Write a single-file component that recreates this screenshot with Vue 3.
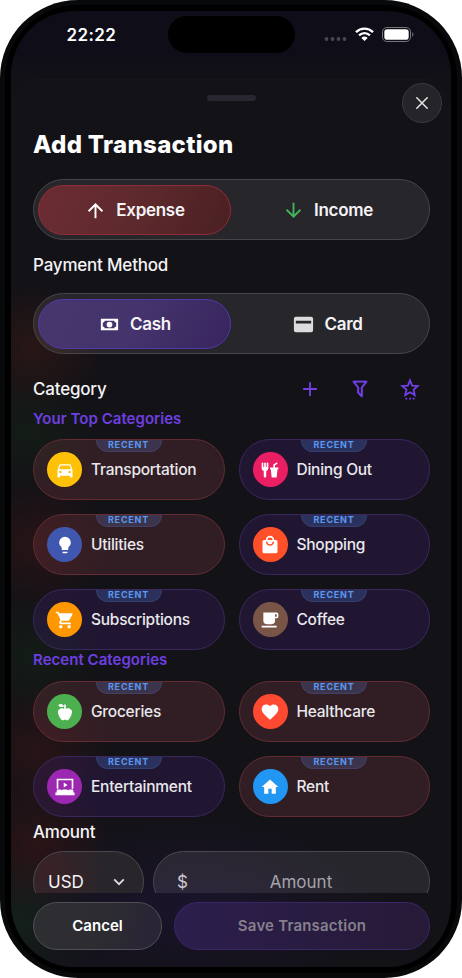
<script setup>
const paths = {
  car: 'M5,11L6.5,6.5H17.5L19,11M17.5,16A1.5,1.5 0 0,1 16,14.5A1.5,1.5 0 0,1 17.5,13A1.5,1.5 0 0,1 19,14.5A1.5,1.5 0 0,1 17.5,16M6.5,16A1.5,1.5 0 0,1 5,14.5A1.5,1.5 0 0,1 6.5,13A1.5,1.5 0 0,1 8,14.5A1.5,1.5 0 0,1 6.5,16M18.92,6C18.72,5.42 18.16,5 17.5,5H6.5C5.84,5 5.28,5.42 5.08,6L3,12V20A1,1 0 0,0 4,21H5A1,1 0 0,0 6,20V19H18V20A1,1 0 0,0 19,21H20A1,1 0 0,0 21,20V12L18.92,6Z',
  bulb: 'M12,2A7,7 0 0,0 5,9C5,11.38 6.19,13.47 8,14.74V17A1,1 0 0,0 9,18H15A1,1 0 0,0 16,17V14.74C17.81,13.47 19,11.38 19,9A7,7 0 0,0 12,2M9,21A1,1 0 0,0 10,22H14A1,1 0 0,0 15,21V20H9V21Z',
  cart: 'M17,18A2,2 0 0,1 19,20A2,2 0 0,1 17,22C15.89,22 15,21.1 15,20C15,18.89 15.89,18 17,18M1,2H4.27L5.21,4H20A1,1 0 0,1 21,5C21,5.17 20.95,5.34 20.88,5.5L17.3,11.97C16.96,12.58 16.3,13 15.55,13H8.1L7.2,14.63L7.17,14.75A0.25,0.25 0 0,0 7.42,15H19V17H7C5.89,17 5,16.1 5,15C5,14.65 5.09,14.32 5.24,14.04L6.6,11.59L3,4H1V2M7,18A2,2 0 0,1 9,20A2,2 0 0,1 7,22C5.89,22 5,21.1 5,20C5,18.89 5.89,18 7,18Z',
  apple: 'M20,10C22,13 17,22 15,22C13,22 13,21 12,21C11,21 11,22 9,22C7,22 2,13 4,10C6,7 9,7 11,8V5C5.38,8.07 4.11,3.78 4.11,3.78C4.11,3.78 6.77,0.19 11,5V3H13V8C15,7 18,7 20,10Z',
  theater: 'M4,4V14H2V2H22V14H20V4ZM10.5,6.5L15,9.5L10.5,12.5ZM2,16.5Q2,15 3.5,15H6.2Q7.6,15 8,16.2Q8.4,15 9.8,15H14.2Q15.6,15 16,16.2Q16.4,15 17.8,15H20.5Q22,15 22,16.5V18.5H23.5V22H0.5V18.5H2Z',
  heart: 'M12,21.35L10.55,20.03C5.4,15.36 2,12.27 2,8.5C2,5.41 4.42,3 7.5,3C9.24,3 10.91,3.81 12,5.08C13.09,3.81 14.76,3 16.5,3C19.58,3 22,5.41 22,8.5C22,12.27 18.6,15.36 13.45,20.03L12,21.35Z',
  home: 'M10,20V14H14V20H19V12H22L12,3L2,12H5V20H10Z',
  coffee: 'M2,21H20V19H2M20,8H18V5H20M20,3H4V13A4,4 0 0,0 8,17H14A4,4 0 0,0 18,13V10H20A2,2 0 0,0 22,8V5C22,3.89 21.1,3 20,3Z',
  bag: 'M12,13A5,5 0 0,1 7,8H9A3,3 0 0,0 12,11A3,3 0 0,0 15,8H17A5,5 0 0,1 12,13M12,3A3,3 0 0,1 15,6H9A3,3 0 0,1 12,3M19,6H17A5,5 0 0,0 12,1A5,5 0 0,0 7,6H5C3.89,6 3,6.9 3,8V20A2,2 0 0,0 5,22H19A2,2 0 0,0 21,20V8C21,6.89 20.1,6 19,6Z',
  dining: 'M3,3A1,1 0 0,0 2,4V8L2,9.5C2,11.19 3.03,12.63 4.5,13.22V19.5A1.5,1.5 0 0,0 6,21A1.5,1.5 0 0,0 7.5,19.5V13.22C8.97,12.63 10,11.19 10,9.5V8L10,4A1,1 0 0,0 9,3A1,1 0 0,0 8,4V8A0.5,0.5 0 0,1 7.5,8.5A0.5,0.5 0 0,1 7,8V4A1,1 0 0,0 6,3A1,1 0 0,0 5,4V8A0.5,0.5 0 0,1 4.5,8.5A0.5,0.5 0 0,1 4,8V4A1,1 0 0,0 3,3M19.88,3C19.75,3 19.62,3.09 19.5,3.16L16,5.25V9H12V11H13L14,21H20L21,11H22V9H18V6.34L20.5,4.84C21,4.56 21.13,4 20.84,3.5C20.63,3.14 20.26,2.95 19.88,3Z',
}

const top = [
  { name: 'Transportation', icon: 'car', bg: 'amber', tone: 'red' },
  { name: 'Dining Out', icon: 'dining', bg: 'pink', tone: 'violet' },
  { name: 'Utilities', icon: 'bulb', bg: 'indigo', tone: 'red' },
  { name: 'Shopping', icon: 'bag', bg: 'deep', tone: 'violet' },
  { name: 'Subscriptions', icon: 'cart', bg: 'orange', tone: 'violet' },
  { name: 'Coffee', icon: 'coffee', bg: 'brown', tone: 'violet' },
]
const recent = [
  { name: 'Groceries', icon: 'apple', bg: 'green', tone: 'red' },
  { name: 'Healthcare', icon: 'heart', bg: 'scarlet', tone: 'red' },
  { name: 'Entertainment', icon: 'theater', bg: 'purple', tone: 'violet' },
  { name: 'Rent', icon: 'home', bg: 'blue', tone: 'red' },
]
const groups = [
  { title: 'Your Top Categories', items: top },
  { title: 'Recent Categories', items: recent },
]
</script>

<template>
  <div class="phone">
    <div class="bezel">
      <div class="screen">
        <header class="status">
          <span class="time">22:22</span>
          <span class="island"></span>
          <span class="signals">
            <svg class="dots" viewBox="0 0 24 4"><circle v-for="n in 4" :key="n" :cx="n * 6 - 3.5" cy="2" r="1.9" /></svg>
            <svg class="wifi" viewBox="0 0 19 14">
              <path d="M1 5.1 A12.2 12.2 0 0 1 18 5.1" />
              <path d="M4.1 8.3 A7.8 7.8 0 0 1 14.9 8.3" />
              <path class="fill" d="M6.3 10.9 A4.6 4.6 0 0 1 12.7 10.9 L9.5 14 Z" />
            </svg>
            <svg class="battery" viewBox="0 0 32 15">
              <rect class="shell" x="0.5" y="0.5" width="28" height="14" rx="4.3" />
              <rect class="level" x="2.3" y="2.3" width="24.4" height="10.4" rx="2.8" />
              <path class="cap" d="M30 5 Q31.6 5.8 31.6 7.5 T30 10 Z" />
            </svg>
          </span>
        </header>

        <main class="sheet">
          <div class="handle"></div>
          <button class="close" aria-label="Close">
            <svg viewBox="0 0 12 12"><path d="M0.8 0.8 11.2 11.2M11.2 0.8 0.8 11.2" /></svg>
          </button>

          <div class="scroll">
            <h1>Add Transaction</h1>
            <div class="track">
              <div class="option chosen-red">
                <svg viewBox="0 0 24 24"><path d="M13,20H11V8L5.5,13.5L4.08,12.08L12,4.16L19.92,12.08L18.5,13.5L13,8V20Z" /></svg>
                <span>Expense</span>
              </div>
              <div class="option">
                <svg class="income" viewBox="0 0 24 24"><path d="M11,4H13V16L18.5,10.5L19.92,11.92L12,19.84L4.08,11.92L5.5,10.5L11,16V4Z" /></svg>
                <span>Income</span>
              </div>
            </div>

            <h2 class="method">Payment Method</h2>
            <div class="track">
              <div class="option chosen-violet">
                <svg viewBox="0 0 24 24"><path d="M3,6H21V18H3V6M12,9A3,3 0 0,1 15,12A3,3 0 0,1 12,15A3,3 0 0,1 9,12A3,3 0 0,1 12,9M7,8A2,2 0 0,1 5,10V14A2,2 0 0,1 7,16H17A2,2 0 0,1 19,14V10A2,2 0 0,1 17,8H7Z" /></svg>
                <span>Cash</span>
              </div>
              <div class="option">
                <svg class="plain" viewBox="0 0 24 24"><path fill-rule="evenodd" d="M4,4H20A2,2 0 0,1 22,6V18A2,2 0 0,1 20,20H4A2,2 0 0,1 2,18V6A2,2 0 0,1 4,4M4,8V11H20V8Z" /></svg>
                <span>Card</span>
              </div>
            </div>

            <div class="category-bar">
              <h2>Category</h2>
              <div class="tools">
                <svg viewBox="0 0 24 24"><path d="M19.5,13H13V19.5H11V13H4.5V11H11V4.5H13V11H19.5V13Z" /></svg>
                <svg class="bold" viewBox="0 0 24 24"><path d="M15,19.88C15.04,20.18 14.94,20.5 14.71,20.71C14.32,21.1 13.69,21.1 13.3,20.71L9.29,16.7C9.06,16.47 8.96,16.16 9,15.87V10.75L4.21,4.62C3.87,4.19 3.95,3.56 4.38,3.22C4.57,3.08 4.78,3 5,3V3H19V3C19.22,3 19.43,3.08 19.62,3.22C20.05,3.56 20.13,4.19 19.79,4.62L15,10.75V19.88M7.04,5L11,10.06V15.58L13,17.58V10.05L16.96,5H7.04Z" /></svg>
                <svg viewBox="0 0 24 24">
                  <path class="line" d="M12 2.6 14.4 8.3 20.4 8.8 15.8 12.8 17.2 18.7 12 15.6 6.8 18.7 8.2 12.8 3.6 8.8 9.6 8.3Z" />
                  <path d="M7 21.5H9V23.5H7ZM11 21.5H13V23.5H11ZM15 21.5H17V23.5H15Z" />
                </svg>
              </div>
            </div>

            <section v-for="group in groups" :key="group.title">
              <h3>{{ group.title }}</h3>
              <div class="grid">
                <article v-for="item in group.items" :key="item.name" class="card" :class="item.tone">
                  <span class="badge">RECENT</span>
                  <span class="disc" :class="item.bg"><svg viewBox="0 0 24 24"><path :d="paths[item.icon]" /></svg></span>
                  <span class="name">{{ item.name }}</span>
                </article>
              </div>
            </section>

            <h2 class="amount-title">Amount</h2>
            <div class="amount-row">
              <div class="field currency">
                <span>USD</span>
                <svg viewBox="0 0 12 8"><path d="M1.2 1.4 6 6.2 10.8 1.4" /></svg>
              </div>
              <div class="field amount">
                <span class="symbol">$</span>
                <span class="placeholder">Amount</span>
              </div>
            </div>
          </div>

          <footer>
            <button class="cancel">Cancel</button>
            <button class="save">Save Transaction</button>
          </footer>
        </main>
      </div>
    </div>
  </div>
</template>

<style>
body {
  background: #fff;
}
</style>

<style scoped>
* {
  box-sizing: border-box;
}
.phone {
  width: 462px;
  height: 978px;
  padding: 5px;
  border-radius: 78px;
  background: #08090b;
  font-family: Inter, "Liberation Sans", sans-serif;
  color: #f4f3f6;
}
.bezel {
  height: 100%;
  padding: 6px;
  border-radius: 73px;
  background: #000;
}
.screen {
  height: 100%;
  display: flex;
  flex-direction: column;
  border-radius: 64px;
  overflow: hidden;
  background: linear-gradient(#0f0d17 0, #0f0d17 45px, #121116 68px);
}
.status {
  height: 68px;
  flex: none;
  display: grid;
  grid-template-columns: 157px 127px 1fr;
}
.time {
  padding: 14px 0 0 55.5px;
  font-size: 17px;
  font-weight: 600;
  line-height: 20px;
  letter-spacing: 0.4px;
  color: #fff;
}
.island {
  height: 37px;
  margin-top: 5px;
  border-radius: 19px;
  background: #000;
}
.signals {
  display: flex;
  gap: 7px;
  height: 15px;
  margin: 16px 0 0 29px;
}
.dots {
  width: 24px;
  height: 4px;
  margin-top: 10px;
  fill: #4b4750;
}
.wifi {
  width: 19px;
  height: 14px;
  fill: none;
  stroke: #fff;
  stroke-width: 2.4;
}
.wifi .fill {
  fill: #fff;
  stroke: none;
}
.battery {
  width: 32px;
  height: 15px;
  margin-left: 1px;
}
.shell {
  fill: none;
  stroke: #77747c;
}
.level {
  fill: #fff;
}
.cap {
  fill: #5b5860;
}
.sheet {
  position: relative;
  flex: 1;
  min-height: 0;
  display: flex;
  flex-direction: column;
  border-radius: 28px 28px 0 0;
  border-top: 1px solid #17161b;
  background:
    radial-gradient(ellipse 72px 62px at 22px 268px, rgba(110, 35, 15, 0.24), transparent),
    radial-gradient(ellipse 72px 60px at 18px 352px, rgba(25, 75, 20, 0.18), transparent),
    radial-gradient(ellipse 75px 66px at 26px 464px, rgba(110, 25, 18, 0.22), transparent),
    radial-gradient(ellipse 72px 60px at 20px 575px, rgba(25, 75, 20, 0.18), transparent),
    radial-gradient(ellipse 75px 66px at 26px 671px, rgba(110, 25, 18, 0.22), transparent),
    radial-gradient(ellipse 75px 66px at 26px 764px, rgba(115, 25, 18, 0.24), transparent),
    radial-gradient(ellipse 80px 70px at 10px 842px, rgba(20, 80, 25, 0.2), transparent),
    radial-gradient(ellipse 200px 90px at 180px 825px, rgba(45, 25, 95, 0.28), transparent),
    #131217;
}
.handle {
  flex: none;
  width: 49px;
  height: 6px;
  margin: 15px auto 0;
  border-radius: 3px;
  background: #28262e;
}
.close {
  position: absolute;
  top: 3px;
  right: 9px;
  width: 40px;
  height: 40px;
  padding: 0;
  display: grid;
  place-items: center;
  border: 1px solid #3a393e;
  border-radius: 50%;
  background: #252428;
}
.close svg {
  width: 12px;
  height: 12px;
  stroke: #e6e5e8;
  stroke-width: 1.5;
  stroke-linecap: round;
}
.scroll {
  flex: 1;
  min-height: 0;
  overflow: hidden;
  padding: 0 21px 0 22px;
}
h1,
h2,
h3 {
  margin: 0;
  white-space: nowrap;
}
h1 {
  margin: 29px 0 19px;
  font-size: 24px;
  line-height: 30px;
  font-weight: 800;
  letter-spacing: 0.33px;
  color: #fff;
}
h2 {
  font-size: 17px;
  line-height: 24px;
  font-weight: 500;
  letter-spacing: -0.2px;
}
.track {
  height: 61px;
  display: grid;
  grid-template-columns: 193px 1fr;
  gap: 2px;
  padding: 5px 7px 5px 4px;
  border: 1px solid #46454a;
  border-radius: 31px;
  background: rgba(255, 255, 255, 0.085);
}
.option {
  height: 50px;
  display: flex;
  align-items: center;
  justify-content: center;
  gap: 9px;
  border: 1px solid transparent;
  border-radius: 25px;
  font-size: 17px;
  font-weight: 600;
  letter-spacing: -0.3px;
}
.option svg {
  width: 23px;
  height: 23px;
  fill: #fff;
}
.option .income {
  fill: #43b358;
}
.option .plain {
  fill: #dcdbde;
}
.chosen-red {
  border-color: #8f2c35;
  background: linear-gradient(115deg, #6b2c32, #602a2e 45%, #4a2022);
}
.chosen-violet {
  border-color: #5237a8;
  background: linear-gradient(115deg, #46376d, #44336c 50%, #38255f);
}
.method {
  margin: 13px 0 16px;
}
.category-bar {
  height: 24px;
  margin-top: 23px;
  display: flex;
  align-items: center;
  justify-content: space-between;
}
.tools {
  display: flex;
  gap: 28px;
  padding-right: 9px;
}
.tools svg {
  width: 22px;
  height: 22px;
  fill: #7040e6;
}
.tools .bold {
  stroke: #7040e6;
  stroke-width: 0.3;
}
.tools .line {
  fill: none;
  stroke: #7040e6;
  stroke-width: 2;
}
h3 {
  height: 20px;
  font-size: 15px;
  line-height: 20px;
  font-weight: 600;
  letter-spacing: 0.04px;
  color: #6e3fe0;
}
.grid {
  display: grid;
  grid-template-columns: 1fr 1fr;
  gap: 14px;
  margin-top: 11px;
}
section:first-of-type {
  margin-top: 8px;
}
section:first-of-type .grid {
  margin-top: 10px;
}
.card {
  position: relative;
  height: 61px;
  display: flex;
  align-items: center;
  gap: 9px;
  padding-left: 13px;
  border: 1px solid;
  border-radius: 31px;
}
.card.red {
  border-color: #622c33;
  background: rgba(200, 92, 105, 0.165);
}
.card.violet {
  border-color: #3a275f;
  background: rgba(95, 46, 180, 0.175);
}
.badge {
  position: absolute;
  top: 0;
  left: 61.5px;
  width: 66px;
  height: 12px;
  border: 1px solid #34406f;
  border-top: 0;
  border-radius: 0 0 12px 12px;
  background: #2b315d;
  color: #5a97ee;
  font-size: 9px;
  line-height: 10px;
  font-weight: 700;
  letter-spacing: 0.8px;
  text-align: center;
}
.red .badge {
  background: #3b344c;
  border-color: #444062;
}
.disc {
  flex: none;
  width: 35px;
  height: 35px;
  display: grid;
  place-items: center;
  border-radius: 50%;
}
.disc svg {
  width: 20px;
  height: 20px;
  fill: #fff;
}
.amber { background: #ffc107; }
.pink { background: #e91e63; }
.indigo { background: #4057b0; }
.deep { background: #ff5029; }
.orange { background: #ff9800; }
.brown { background: #795548; }
.green { background: #4caf50; }
.scarlet { background: #ff4931; }
.purple { background: #9c27b0; }
.blue { background: #2196f3; }
.name {
  font-size: 15.5px;
  font-weight: 500;
  letter-spacing: -0.25px;
  color: #eae8ec;
  white-space: nowrap;
}
.amount-title {
  margin: 3px 0 7px;
}
.amount-row {
  display: flex;
  gap: 9px;
}
.field {
  flex: none;
  height: 61px;
  display: flex;
  align-items: center;
  border: 1px solid #4a484e;
  border-radius: 31px;
  background: rgba(255, 255, 255, 0.085);
  font-size: 17px;
}
.currency {
  width: 111px;
  justify-content: space-between;
  padding: 0 18px 0 14px;
  background: radial-gradient(circle at 10% 30%, #3a2227, #28262b 60%);
}
.currency svg {
  width: 12px;
  height: 8px;
  fill: none;
  stroke: #dddce0;
  stroke-width: 1.8;
}
.amount {
  width: 277px;
  padding: 0 15px 0 23px;
}
.symbol {
  color: #cccad0;
}
.placeholder {
  flex: 1;
  text-align: center;
  color: #a5a3a9;
}
footer {
  flex: none;
  height: 74px;
  display: flex;
  gap: 12px;
  padding: 9px 21px 17px 22px;
}
footer button {
  padding: 0 0 1px;
  border-radius: 24px;
  font: 600 15px Inter, "Liberation Sans", sans-serif;
}
.cancel {
  width: 129px;
  border: 1px solid #504f56;
  background: linear-gradient(100deg, #2e2f32, #2c2b31 60%, #292338);
  color: #fff;
}
.save {
  flex: 1;
  border: 1px solid #3b2768;
  background: linear-gradient(90deg, #2c1e4d, #261a37);
  color: #85808c;
  letter-spacing: 0.2px;
}
</style>
